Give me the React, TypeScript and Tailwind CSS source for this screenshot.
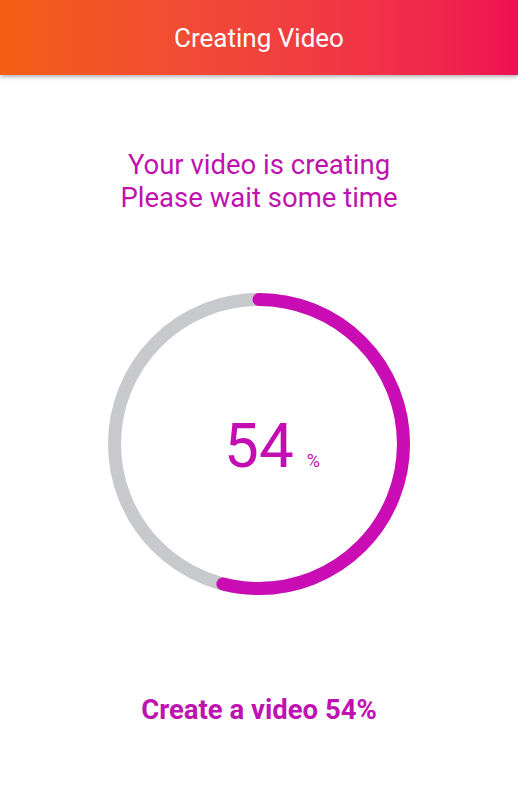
import React from 'react';

const progress = 54;
const size = 302;
const stroke = 13;
const r = (size - stroke) / 2;
const c = 2 * Math.PI * r;

const ProgressRing = () => {
    return (
        <div className="relative w-[302px] h-[302px]">
            <svg width={size} height={size} viewBox={`0 0 ${size} ${size}`}>
                <circle cx={size / 2} cy={size / 2} r={r} fill="none" stroke="#c8c9cc" strokeWidth={stroke} />
                <circle
                    cx={size / 2}
                    cy={size / 2}
                    r={r}
                    fill="none"
                    stroke="#c90cb3"
                    strokeWidth={stroke}
                    strokeLinecap="round"
                    strokeDasharray={`${(c * progress) / 100} ${c}`}
                    transform={`rotate(-90 ${size / 2} ${size / 2})`}
                />
            </svg>
            <div className="absolute inset-0 flex items-baseline justify-center pt-[122px] text-[#c30db3]">
                <span className="text-[62px] leading-none ml-[26px]">{progress}</span>
                <span className="text-[18px] leading-none ml-[13px]">%</span>
            </div>
        </div>
    );
};

const App = () => {
    return (
        <div className="min-h-[800px] bg-white font-['Roboto',sans-serif] flex flex-col">

            <div className="h-[75px] flex items-center justify-center bg-gradient-to-r from-[#f35e10] to-[#ef0f52] shadow-[0_2px_4px_rgba(0,0,0,0.3)]">
                <h1 className="text-white text-[26px] leading-none">Creating Video</h1>
            </div>

            <div className="flex flex-col items-center pt-[73px] text-[#c012b0] text-[27.5px] leading-[33px]">
                <p>Your video is creating</p>
                <p>Please wait some time</p>
            </div>

            <div className="flex justify-center pt-[79px]">
                <ProgressRing />
            </div>

            <div className="flex justify-center pt-[98px]">
                <p className="text-[#c012b0] text-[27.5px] leading-[33px] font-bold">Create a video {progress}%</p>
            </div>

        </div>
    );
};

export default App;
